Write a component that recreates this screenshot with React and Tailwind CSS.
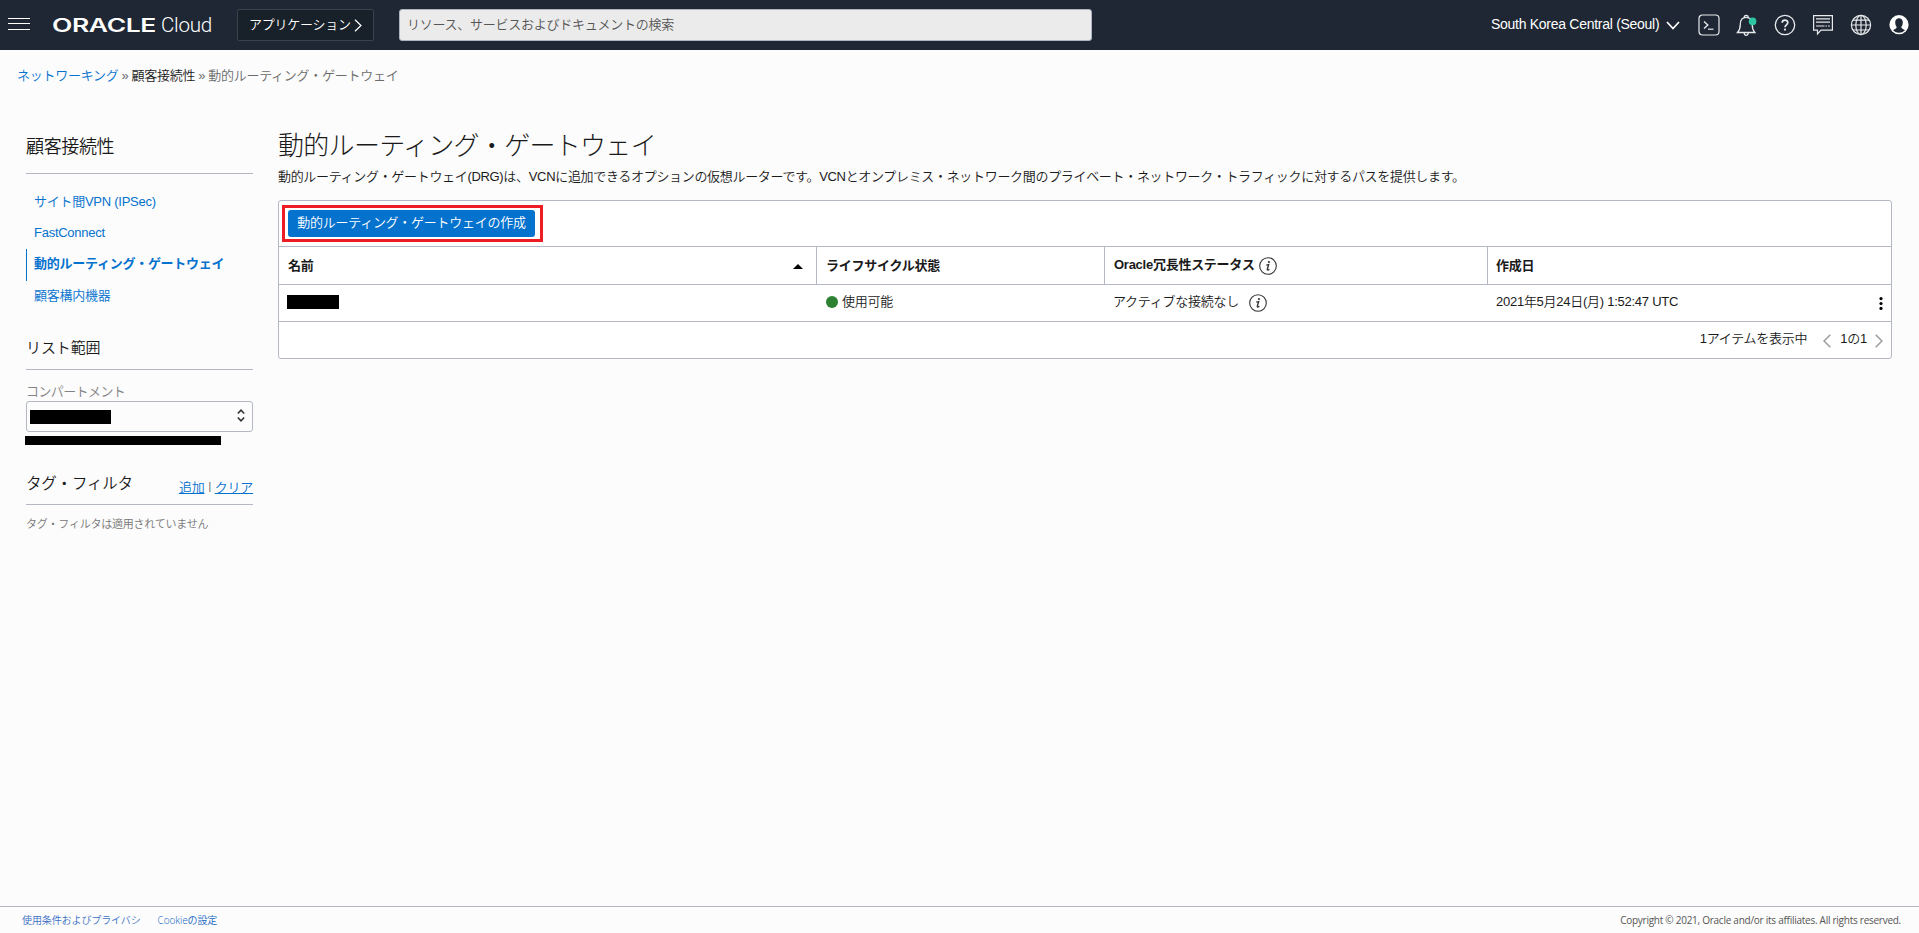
import React from 'react';

const SIDE_LINKS = [
    { label: 'サイト間VPN (IPSec)' },
    { label: 'FastConnect' },
    { label: '動的ルーティング・ゲートウェイ', active: true },
    { label: '顧客構内機器' },
];

const Chevron = ({ className, d, viewBox, width = 1.5 }) => (
    <svg className={className} viewBox={viewBox} fill="none" stroke="currentColor" strokeWidth={width}>
        <path d={d} />
    </svg>
);

const InfoIcon = ({ className }) => (
    <svg className={className} viewBox="0 0 18 18" fill="none" stroke="#333" strokeWidth="1.1">
        <circle cx="9" cy="9" r="8.3" />
        <circle cx="9.9" cy="5" r="1.1" fill="#333" stroke="none" />
        <path d="M7.3 8.1L9.6 7.6L8.3 12.4Q8.2 13.6 10.4 12.4" strokeWidth="1.4" />
    </svg>
);

const Header = () => (
    <header className="h-[50px] bg-[#1e2733] flex items-start text-white shrink-0">
        <svg className="w-[22px] h-[13px] ml-2 mt-[18px]" viewBox="0 0 22 13" fill="#fff" shapeRendering="crispEdges">
            <path d="M0 0h22v1H0zM0 5h22v1H0zM0 11h22v1H0z" />
        </svg>
        <svg className="w-[160px] h-[30px] ml-[23px] mt-[10px]" viewBox="0 0 160 30" fill="#fff">
            <text x="-1" y="22" fontFamily="Inter, sans-serif" fontWeight="600" fontSize="18" textLength="104" lengthAdjust="spacingAndGlyphs">ORACLE</text>
            <text x="108" y="22" fontFamily="Roboto, sans-serif" fontWeight="300" fontSize="19.5" textLength="51" lengthAdjust="spacingAndGlyphs">Cloud</text>
        </svg>
        <button className="w-[137px] h-8 ml-6 mt-[9px] pl-[11px] flex items-center border border-[#39424d] rounded-[2px] bg-[#18202a]">
            <span className="w-[101px] whitespace-nowrap text-left leading-[20px]">アプリケーション</span>
            <Chevron className="w-[8px] h-[13px] ml-[4px] mt-[1px]" viewBox="0 0 8 13" d="M1 .7L7 6.5L1 12.3" width={1.2} />
        </button>
        <div className="w-[693px] h-8 ml-[25px] mt-[9px] pl-[7px] border border-[#aeb4bf] rounded-[3px] bg-[#ebebeb] text-[#555] leading-[30px]">
            リソース、サービスおよびドキュメントの検索
        </div>
        <div className="ml-auto flex items-start pr-[9px]">
            <span className="w-[171px] mt-[14px] leading-5 whitespace-nowrap text-[14px] tracking-[-0.28px] font-normal">South Korea Central (Seoul)</span>
            <Chevron className="w-[14px] h-[9px] ml-[4px] mt-[21px]" viewBox="0 0 14 9" d="M1 1L7 7.5L13 1" width={1.7} />
            <div className="ml-[18px] mt-[14px] flex gap-[16px] text-[#e8eaec]">
                <svg className="w-[22px] h-[22px]" viewBox="0 0 22 22" fill="none" stroke="currentColor">
                    <rect x="1" y="1" width="20" height="20" rx="3.5" strokeWidth="1.2" />
                    <path d="M6 7.5L9.8 11L6 14.5" strokeWidth="1.4" />
                    <path d="M10 15.2H15.5" strokeWidth="1.2" />
                </svg>
                <svg className="w-[22px] h-[22px]" viewBox="0 0 22 22" fill="none" stroke="currentColor" strokeWidth="1.3">
                    <path d="M1.5 18.5H18.8C16.6 16.2 16.2 14.5 16.2 10.5C16.2 6 14 3.3 10.2 3.3C6.3 3.3 4.3 6 4.3 10.5C4.3 14.5 3.6 16.2 1.5 18.5Z" />
                    <path d="M8.4 3.4V2.3Q10.2 .3 12 2.3V3.4M8.2 19Q8.4 21.3 10.2 21.3Q12 21.3 12.2 19" />
                    <circle cx="16.6" cy="7.4" r="3.8" fill="#2dc5a2" stroke="none" />
                </svg>
                <svg className="w-[22px] h-[22px]" viewBox="0 0 22 22" fill="none" stroke="currentColor">
                    <circle cx="11" cy="11" r="9.7" strokeWidth="1.3" />
                    <path d="M8.2 8.7C8.2 5.4 13.8 5.4 13.8 8.6C13.8 10.8 11 10.8 11 13.3" strokeWidth="1.7" />
                    <circle cx="11" cy="15.6" r="1.1" fill="currentColor" stroke="none" />
                </svg>
                <svg className="w-[22px] h-[22px]" viewBox="0 0 22 22" fill="none" stroke="currentColor">
                    <path d="M1.6 1.6H20.4V16.2H9L5.5 20V16.2H1.6Z" strokeWidth="1.2" />
                    <path d="M4 4.8H18M4 8.2H18M4 12H12.5M13.5 12H15M16 12H17.8" strokeWidth="1.2" />
                </svg>
                <svg className="w-[22px] h-[22px]" viewBox="0 0 22 22" fill="none" stroke="currentColor" strokeWidth="1.2">
                    <circle cx="11" cy="11" r="9.6" />
                    <ellipse cx="11" cy="11" rx="5.2" ry="9.6" />
                    <path d="M11 1.4V20.6M1.4 11H20.6M3 6.2H19M3 16H19" />
                </svg>
                <svg className="w-[22px] h-[22px]" viewBox="0 0 22 22">
                    <circle cx="11" cy="10.7" r="9.6" fill="#fff" />
                    <path d="M7.2 8.2C7.2 2.8 14.8 2.8 14.8 8.2C14.8 11 13.8 12.2 13.3 13C13.1 14.5 15.5 15 17 16.3Q14.5 18.8 11 18.8Q7.5 18.8 5 16.3C6.5 15 8.9 14.5 8.7 13C8.2 12.2 7.2 11 7.2 8.2Z" fill="#1e2733" />
                </svg>
            </div>
        </div>
    </header>
);

const Sidebar = () => (
    <aside className="w-[227px] ml-[26px] shrink-0">
        <h2 className="h-[62px] pt-[21px] text-[18px] leading-7 tracking-[-0.36px] border-b border-[#b3b8c4]">顧客接続性</h2>
        <ul className="pt-[13px]">
            {SIDE_LINKS.map((link) => (
                <li
                    key={link.label}
                    className={link.active
                        ? 'h-8 leading-[30px] pl-[7px] border-l border-[#0572ce] text-[#0572ce] font-bold'
                        : 'h-[31px] leading-[29px] pl-2 text-[#0572ce]'}
                >
                    {link.label}
                </li>
            ))}
        </ul>

        <h3 className="h-[58px] pt-[22px] text-[15px] leading-7 tracking-[-0.1px] border-b border-[#b3b8c4]">リスト範囲</h3>
        <label className="block mt-[11px] h-5 leading-[21px] text-[#828282] tracking-[-0.6px]">コンパートメント</label>
        <div className="h-[31px] flex items-center border border-[#b3b8c4] rounded-[3px] pl-[3px] pr-[7px]">
            <div className="w-[81px] h-[14px] mt-px bg-black" />
            <svg className="w-[8px] h-[13px] ml-auto mb-[2px]" viewBox="0 0 8 13" fill="none" stroke="#333" strokeWidth="1.6">
                <path d="M.8 4.5L4 1.2L7.2 4.5M.8 8.5L4 11.8L7.2 8.5" />
            </svg>
        </div>
        <div className="w-[196px] h-[9px] -ml-px mt-[4px] bg-black" />

        <div className="h-[60px] pt-[25px] flex justify-between border-b border-[#b3b8c4]">
            <h3 className="text-[15.5px] leading-7 tracking-[-0.2px]">タグ・フィルタ</h3>
            <div className="flex mt-[4px] h-7 leading-7 text-[#0572ce]">
                <a className="underline">追加</a>
                <span className="mx-[4px] text-[10px] leading-[26px] text-[#555]">|</span>
                <a className="underline">クリア</a>
            </div>
        </div>
        <p className="mt-[9px] text-[11px] leading-5 text-[#757575] tracking-[-0.22px]">タグ・フィルタは適用されていません</p>
    </aside>
);

const GatewayTable = () => (
    <section className="mt-[13px] h-[159px] bg-white border border-[#b3b8c4] rounded-[3px] flex flex-col">
        <div className="h-[46px] pl-[3px] pt-1 border-b border-[#b3b8c4]">
            <div className="w-[261px] h-[37px] border-[3px] border-[#ee1c25] pl-[3px] pt-[2px]">
                <button className="block w-[247px] h-[27px] leading-[23px] pb-[2px] rounded-[3px] bg-[#0572ce] text-white whitespace-nowrap">
                    動的ルーティング・ゲートウェイの作成
                </button>
            </div>
        </div>
        <div className="h-[38px] leading-[37px] grid grid-cols-[538px_288px_383px_1fr] border-b border-[#b3b8c4] font-bold">
            <div className="pl-[9px] pr-[13px] flex items-center justify-between border-r border-[#b3b8c4]">
                名前
                <svg className="w-[10px] h-[5px] mt-[2px]" viewBox="0 0 10 5"><path d="M0 5L5 0L10 5Z" /></svg>
            </div>
            <div className="pl-[9px] border-r border-[#b3b8c4]">ライフサイクル状態</div>
            <div className="pl-[9px] flex items-center border-r border-[#b3b8c4]">
                <span className="w-[141px] leading-[35px] h-[37px] whitespace-nowrap">Oracle冗長性ステータス</span>
                <InfoIcon className="w-[18px] h-[18px] ml-1 mt-[1px]" />
            </div>
            <div className="pl-[8px]">作成日</div>
        </div>
        <div className="h-[37px] leading-[34px] grid grid-cols-[538px_288px_383px_1fr] border-b border-[#b3b8c4]">
            <div className="pl-2 pt-[10px]">
                <div className="w-[52px] h-[14px] bg-black" />
            </div>
            <div className="pl-[9px] flex">
                <span className="w-3 h-3 mt-[11px] mr-[4px] rounded-full bg-[#2f8132]" />
                使用可能
            </div>
            <div className="pl-[8px] flex">
                <span className="w-[127px] whitespace-nowrap">アクティブな接続なし</span>
                <InfoIcon className="w-[18px] h-[18px] ml-[9px] mt-[9px]" />
            </div>
            <div className="pl-[8px] pr-2 flex justify-between">
                2021年5月24日(月) 1:52:47 UTC
                <svg className="w-[4px] h-[13px] mt-3" viewBox="0 0 4 13">
                    <circle cx="2" cy="1.6" r="1.6" />
                    <circle cx="2" cy="6.5" r="1.6" />
                    <circle cx="2" cy="11.4" r="1.6" />
                </svg>
            </div>
        </div>
        <div className="h-9 leading-[34px] pr-2 flex justify-end">
            <span>1アイテムを表示中</span>
            <Chevron className="w-[8px] h-[14px] ml-[16px] mt-3 text-[#9b9b9b]" viewBox="0 0 8 14" d="M7.3 .7L1 7L7.3 13.3" />
            <span className="ml-[9px] mr-[8px]">1の1</span>
            <Chevron className="w-[8px] h-[14px] mt-3 text-[#9b9b9b]" viewBox="0 0 8 14" d="M.7 .7L7 7L.7 13.3" />
        </div>
    </section>
);

const App = () => {
    return (
        <div className="h-screen overflow-hidden flex flex-col bg-[#fcfcfc] text-[#1a1a1a] text-[13px] font-[350] tracking-[-0.26px] font-['Liberation_Sans','Noto_Sans_CJK_JP',sans-serif]">
            <Header />
            <nav className="h-[62px] pt-[15px] pl-[17px] leading-[21px] flex gap-[3px] text-[#6b6b6b]">
                <a className="text-[#0572ce]">ネットワーキング</a>
                <span>»</span>
                <span className="text-[#1a1a1a]">顧客接続性</span>
                <span>»</span>
                <span>動的ルーティング・ゲートウェイ</span>
            </nav>
            <div className="flex-1 flex">
                <Sidebar />
                <main className="flex-1 ml-[25px] mr-[27px] pt-[16px]">
                    <h1 className="text-[26px] leading-[36px] font-light tracking-[-0.7px]">動的ルーティング・ゲートウェイ</h1>
                    <p className="mt-[2px] leading-[21px] whitespace-nowrap tracking-[-0.32px]">
                        動的ルーティング・ゲートウェイ(DRG)は、VCNに追加できるオプションの仮想ルーターです。VCNとオンプレミス・ネットワーク間のプライベート・ネットワーク・トラフィックに対するパスを提供します。
                    </p>
                    <GatewayTable />
                </main>
            </div>
            <footer className="h-[27px] flex items-center pl-[22px] pr-[18px] border-t border-[#b3b8c4] text-[10px] tracking-[-0.1px] font-['Open_Sans','Noto_Sans_CJK_JP',sans-serif]">
                <a className="text-[#3a6fc4]">使用条件およびプライバシ</a>
                <a className="ml-[17px] text-[#0f62c0]">Cookieの設定</a>
                <span className="ml-auto text-[#555] font-normal tracking-[-0.26px]">Copyright © 2021, Oracle and/or its affiliates. All rights reserved.</span>
            </footer>
        </div>
    );
};

export default App;
